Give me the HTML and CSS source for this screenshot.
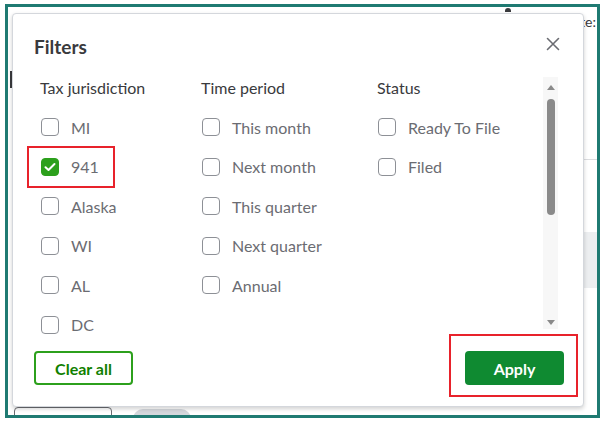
FILE: index.html
```html
<!DOCTYPE html>
<html lang="en">
<head>
    <meta charset="UTF-8">
    <meta name="viewport" content="width=device-width, initial-scale=1.0">
    <title>Filters</title>
    <link rel="stylesheet" href="styles.css">
</head>
<body>
    <div class="frame">
        <div class="page">
            <span class="bg-due">Due date:</span>
            <span class="bg-mark bg-mark-top"></span>
            <span class="bg-mark bg-mark-left"></span>
            <span class="bg-band"></span>
            <span class="bg-line"></span>
            <span class="bg-btn"></span>
            <span class="bg-pill"></span>

            <div class="modal">
                <div class="modal-head">
                    <h1>Filters</h1>
                    <button class="close" aria-label="Close">
                        <svg width="14" height="14" viewBox="0 0 14 14">
                            <path d="M1.5 1.5 L12.5 12.5 M12.5 1.5 L1.5 12.5" stroke="#6b6c72" stroke-width="1.6" stroke-linecap="round"/>
                        </svg>
                    </button>
                </div>

                <div class="modal-body">
                    <div class="columns">
                        <div class="col">
                            <h2>Tax jurisdiction</h2>
                            <label class="opt"><span class="box"></span>MI</label>
                            <div class="highlight">
                                <label class="opt"><span class="box checked">
                                    <svg width="12" height="10" viewBox="0 0 12 10"><path d="M1.5 5.2 L4.5 8 L10.5 2" fill="none" stroke="#fff" stroke-width="2" stroke-linecap="round" stroke-linejoin="round"/></svg>
                                </span>941</label>
                            </div>
                            <label class="opt"><span class="box"></span>Alaska</label>
                            <label class="opt"><span class="box"></span>WI</label>
                            <label class="opt"><span class="box"></span>AL</label>
                            <label class="opt"><span class="box"></span>DC</label>
                        </div>
                        <div class="col">
                            <h2>Time period</h2>
                            <label class="opt"><span class="box"></span>This month</label>
                            <label class="opt"><span class="box"></span>Next month</label>
                            <label class="opt"><span class="box"></span>This quarter</label>
                            <label class="opt"><span class="box"></span>Next quarter</label>
                            <label class="opt"><span class="box"></span>Annual</label>
                        </div>
                        <div class="col">
                            <h2>Status</h2>
                            <label class="opt"><span class="box"></span>Ready To File</label>
                            <label class="opt"><span class="box"></span>Filed</label>
                        </div>
                    </div>
                    <div class="scrollbar">
                        <span class="arrow up"></span>
                        <span class="track"><span class="thumb"></span></span>
                        <span class="arrow down"></span>
                    </div>
                </div>

                <div class="modal-foot">
                    <button class="btn btn-outline">Clear all</button>
                    <div class="apply-mark">
                        <button class="btn btn-primary">Apply</button>
                    </div>
                </div>
            </div>
        </div>
    </div>
</body>
</html>
```

FILE: styles.css
```css
body {
    margin: 0;
    background: #fff;
    font-family: 'Lato', 'Open Sans', sans-serif;
}
.frame {
    margin: 4px 0 0 5px;
    width: 589px;
    height: 408px;
    border: 3px solid #1f7a72;
}
.page {
    position: relative;
    height: 100%;
    overflow: hidden;
    background: #fff;
}
.bg-due {
    position: absolute;
    right: 1px;
    top: 6px;
    font-size: 14px;
    color: #393a3d;
}
.bg-mark {
    position: absolute;
    background: #393a3d;
}
.bg-mark-top {
    left: 497px;
    top: 1px;
    width: 6px;
    height: 4px;
    border-radius: 3px 3px 0 0;
}
.bg-mark-left {
    left: 2px;
    top: 64px;
    width: 2px;
    height: 17px;
}
.bg-band {
    position: absolute;
    right: 0;
    top: 225px;
    width: 14px;
    height: 56px;
    background: #eceef0;
}
.bg-line {
    position: absolute;
    right: 0;
    top: 152px;
    width: 14px;
    height: 1px;
    background: #dcdde0;
}
.bg-btn {
    position: absolute;
    left: 6px;
    top: 400px;
    width: 96px;
    height: 20px;
    border: 1px solid #6b6c72;
    border-radius: 4px;
}
.bg-pill {
    position: absolute;
    left: 125px;
    top: 402px;
    width: 58px;
    height: 20px;
    border-radius: 10px;
    background: #d4d7dc;
}
.modal {
    position: absolute;
    left: 4px;
    top: 6px;
    width: 570px;
    height: 392px;
    background: #fff;
    border: 1px solid #d4d7dc;
    border-radius: 4px;
    box-shadow: 0 2px 4px rgba(0, 0, 0, 0.18);
    display: flex;
    flex-direction: column;
}
.modal-head {
    display: flex;
    justify-content: space-between;
    align-items: center;
    padding: 17px 23px 0 21px;
    height: 30px;
    flex-shrink: 0;
}
h1 {
    margin: 0;
    font-size: 19px;
    font-weight: 700;
    color: #393a3d;
}
.close {
    border: none;
    background: none;
    padding: 0;
    width: 14px;
    height: 14px;
    margin-top: -5px;
    display: flex;
}
.modal-body {
    display: flex;
    margin: 16px 25px 0 28px;
    height: 252px;
    flex-shrink: 0;
}
.columns {
    flex: 1;
    display: grid;
    grid-template-columns: 161px 176px 1fr;
    align-content: start;
}
.col {
    display: flex;
    flex-direction: column;
}
h2 {
    margin: 0 0 18px -1px;
    height: 22px;
    line-height: 22px;
    font-size: 16px;
    font-weight: 400;
    color: #393a3d;
}
.opt {
    display: flex;
    align-items: center;
    gap: 12px;
    height: 20px;
    margin-bottom: 19.6px;
    font-size: 16px;
    color: #6b6c72;
}
.box {
    width: 16px;
    height: 16px;
    border: 1px solid #8d9096;
    border-radius: 4px;
    display: flex;
    align-items: center;
    justify-content: center;
}
.box.checked {
    background: #2ca01c;
    border-color: #2ca01c;
}
.highlight {
    margin: -11px 0 8.6px -14px;
    width: 88px;
    height: 42px;
    border: 2px solid #e8222b;
    padding: 9px 0 0 12px;
    box-sizing: border-box;
}
.highlight .opt {
    margin: 0;
}
.scrollbar {
    width: 15px;
    display: flex;
    flex-direction: column;
    align-items: center;
    background: #f7f7f7;
}
.arrow {
    width: 0;
    height: 0;
    border-left: 4px solid transparent;
    border-right: 4px solid transparent;
    margin: 8px 0 0;
}
.arrow.up {
    border-bottom: 5px solid #8a8a8a;
}
.arrow.down {
    border-top: 5px solid #8a8a8a;
    margin: 0 0 4px;
}
.track {
    flex: 1;
    display: flex;
    justify-content: center;
    padding-top: 9px;
}
.thumb {
    width: 8px;
    height: 116px;
    border-radius: 4px;
    background: #8a8a8a;
}
.modal-foot {
    display: flex;
    justify-content: space-between;
    align-items: flex-start;
    padding: 5px 5px 0 21px;
}
.btn {
    font-family: inherit;
    font-size: 16px;
    font-weight: 700;
    height: 34px;
    border-radius: 4px;
    cursor: pointer;
}
.btn-outline {
    width: 99px;
    margin-top: 17px;
    background: #fff;
    border: 2px solid #2ca01c;
    color: #108000;
}
.apply-mark {
    border: 2px solid #e8222b;
    padding: 15px 12px 10px 14px;
}
.btn-primary {
    width: 99px;
    border: none;
    background: #0f8a31;
    color: #fff;
}
```
